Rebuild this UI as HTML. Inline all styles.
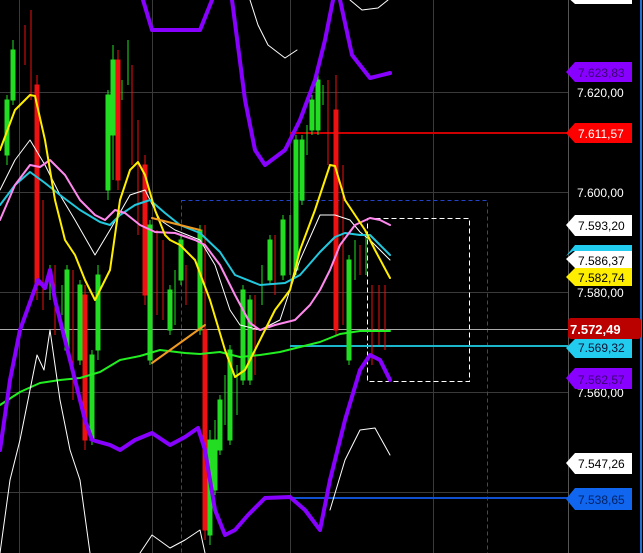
<!DOCTYPE html>
<html><head><style>
html,body{margin:0;padding:0;background:#000;}
svg{display:block}
text{font-family:"Liberation Sans",sans-serif;font-size:12px}
</style></head><body>
<svg width="643" height="553" viewBox="0 0 643 553" xmlns="http://www.w3.org/2000/svg">
<rect width="643" height="553" fill="#000"/>
<g stroke="#3a3a3a" stroke-width="1">
<line x1="19.5" y1="0" x2="19.5" y2="553"/><line x1="152.5" y1="0" x2="152.5" y2="553"/>
<line x1="290.5" y1="0" x2="290.5" y2="553"/><line x1="433.5" y1="0" x2="433.5" y2="553"/>
<line x1="0" y1="92.5" x2="568" y2="92.5"/><line x1="0" y1="192.5" x2="568" y2="192.5"/>
<line x1="0" y1="292.5" x2="568" y2="292.5"/><line x1="0" y1="392.5" x2="568" y2="392.5"/>
<line x1="0" y1="492.5" x2="568" y2="492.5"/>
</g>
<line x1="568.5" y1="0" x2="568.5" y2="553" stroke="#555"/>
<line x1="641" y1="0" x2="641" y2="553" stroke="#1e6fd0" stroke-width="2"/>
<rect x="181.5" y="200.5" width="306" height="360" fill="none" stroke="#2244cc" stroke-dasharray="4,3"/>
<rect x="367.5" y="218.5" width="102" height="163" fill="none" stroke="#fff" stroke-dasharray="5,3"/>
<line x1="0" y1="329.5" x2="568" y2="329.5" stroke="#aaa"/>
<line x1="290" y1="133" x2="568" y2="133" stroke="#c00" stroke-width="2"/>
<line x1="290" y1="346" x2="568" y2="346" stroke="#1bb5cc" stroke-width="2"/>
<line x1="290" y1="498" x2="568" y2="498" stroke="#1050d0" stroke-width="2"/>
<g id="c">
<g stroke="#22dd22" fill="#22dd22">
<path d="M7 95V165M13 40V105M98 265V360M108 90V200M113 45V180M122 80V100M128 40V85M150 220V365M170 285V335M175 270V325M181 235V285M200 225V335M210 430V545M215 420V495M220 395V455M225 375V425M230 345V445M237 365V415M243 285V385M250 295V385M262 265V305M270 235V285M283 215V280M290 215V275M296 135V275M302 135V205M307 125V155M312 95V135M318 75V135M323 85V105M349 255V365M355 240V280M366 235V275M50 265V300M62 285V315M67 265V355M80 280V365M92 350V445" stroke-width="1"/>
<rect x="5" y="100" width="4" height="55"/><rect x="11" y="50" width="4" height="50"/><rect x="96" y="275" width="4" height="75"/>
<rect x="106" y="95" width="4" height="95"/><rect x="111" y="60" width="4" height="75"/><rect x="148" y="225" width="4" height="135"/>
<rect x="168" y="290" width="4" height="40"/><rect x="179" y="240" width="4" height="40"/><rect x="198" y="230" width="4" height="100"/>
<rect x="208" y="440" width="4" height="95"/><rect x="213" y="440" width="4" height="50"/><rect x="218" y="400" width="4" height="50"/>
<rect x="228" y="350" width="4" height="90"/><rect x="241" y="290" width="4" height="90"/><rect x="248" y="300" width="4" height="80"/>
<rect x="268" y="240" width="4" height="40"/><rect x="281" y="220" width="4" height="55"/><rect x="294" y="140" width="4" height="130"/>
<rect x="300" y="140" width="4" height="60"/><rect x="310" y="100" width="4" height="30"/><rect x="316" y="80" width="4" height="50"/>
<rect x="347" y="260" width="4" height="100"/><rect x="65" y="270" width="4" height="80"/><rect x="78" y="285" width="4" height="75"/><rect x="90" y="355" width="4" height="85"/>
</g>
<g stroke="#ee1111" fill="#ee1111">
<path d="M25 25V65M31 10V100M37 75V300M43 200V310M55 265V335M73 270V400M85 285V450M118 50V190M132 65V165M138 120V235M145 155V305M157 230V315M163 240V320M186 265V305M205 225V540M255 295V375M275 235V295M328 80V165M336 75V335M343 165V325M360 245V275M372 285V365M379 285V345M385 285V350"/>
<rect x="35" y="85" width="4" height="200"/><rect x="203" y="330" width="4" height="200"/><rect x="334" y="110" width="4" height="220"/>
<rect x="116" y="60" width="4" height="120"/><rect x="143" y="165" width="4" height="130"/><rect x="83" y="295" width="4" height="145"/>
</g>
</g>
<g fill="none" stroke-linejoin="round" stroke-linecap="round">
<polyline stroke="#22ee22" stroke-width="2" points="0,405 20,392 40,383 60,380 80,378 100,372 120,360 140,356 160,350 185,353 200,354 220,352 240,357 260,355 280,352 300,347 320,342 340,334 360,331 390,331"/>
<polyline stroke="#fff" stroke-width="1" points="0,553 10,480 20,440 30,390 37,355 44,370 50,330 60,400 70,450 80,480 90,553"/>
<polyline stroke="#fff" stroke-width="1" points="140,553 152,535 170,548 185,540 200,530 205,553"/>
<polyline stroke="#fff" stroke-width="1" points="330,510 345,460 360,430 375,428 390,455"/>
<polyline stroke="#fff" stroke-width="1" points="350,0 362,10 378,8 388,0"/>
<polyline stroke="#fff" stroke-width="1" points="250,0 258,25 268,45 285,58 297,50"/>
<polyline stroke="#fff" stroke-width="1" points="0,190 15,160 30,140 45,165 60,195 75,220 95,255 110,230 130,195 145,190 160,220 175,230 200,240 215,265 230,310 240,325 260,330 280,320 300,260 320,215 335,215 350,220 360,232 370,240 390,260"/>
<polyline stroke="#22c8dd" stroke-width="2" points="0,205 15,185 30,172 45,183 60,195 80,210 100,222 110,225 120,215 135,205 150,200 165,213 180,225 200,233 220,252 235,275 260,285 285,283 300,275 320,252 335,237 345,233 360,235 370,235 380,245 390,255"/>
<polyline stroke="#ff88ee" stroke-width="2" points="0,220 15,185 30,165 40,167 50,160 65,175 80,200 95,215 105,220 115,210 125,213 140,225 155,232 175,233 195,240 205,245 220,265 235,295 250,323 260,330 275,325 295,320 310,305 320,290 330,270 340,245 355,225 370,218 380,220 390,225"/>
<polyline stroke="#ffee00" stroke-width="2" points="0,150 15,110 30,95 35,96 45,140 55,200 65,240 75,255 85,280 95,300 110,270 120,200 130,170 138,162 145,175 155,210 165,235 170,240 180,245 195,260 210,300 225,350 235,377 245,370 260,340 275,310 290,290 300,250 315,210 330,165 335,166 345,200 355,215 365,230 375,250 390,278"/>
<polyline stroke="#ee9922" stroke-width="2" points="152,363 205,325"/>
<polyline stroke="#ee9922" stroke-width="2" points="152,218 200,230"/>
<polyline stroke="#8800ff" stroke-width="4" points="143,0 152,30 200,30 212,0"/>
<polyline stroke="#8800ff" stroke-width="4" points="232,0 245,100 255,150 265,165 285,150 300,120 315,80 325,40 333,0"/>
<polyline stroke="#8800ff" stroke-width="4" points="340,0 352,55 370,78 390,73"/>
<polyline stroke="#8800ff" stroke-width="4" points="0,450 10,380 20,330 38,280 45,288 50,270 55,300 70,360 85,420 92,440 110,445 120,450 135,440 152,433 170,445 185,437 198,428 205,450 215,510 225,535 235,530 248,515 265,498 290,497 305,510 320,530 330,480 345,420 360,370 370,355 380,360 390,380"/>
</g>
<g fill="#fff">
<text x="577" y="97">7.620,00</text><text x="577" y="197">7.600,00</text>
<text x="577" y="297">7.580,00</text><text x="577" y="397">7.560,00</text>
</g>
<g>
<path d="M575 -12H632V4H575L566 -4Z" fill="#fff"/>
<path d="M575 62H632V82H575L566 72Z" fill="#8800ff"/><text x="578" y="77" fill="#3a0070">7.623,83</text>
<path d="M575 123H632V143H575L566 133Z" fill="#ff0000"/><text x="578" y="138" fill="#fff">7.611,57</text>
<path d="M575 215H632V236H575L566 225Z" fill="#fff"/><text x="578" y="230" fill="#000">7.593,20</text>
<path d="M575 245H632V251H573L566 256Z" fill="#22ccee"/>
<path d="M575 251H632V268H575L566 259Z" fill="#fff"/><text x="578" y="265" fill="#000">7.586,37</text>
<path d="M575 268H632V286H575L566 277Z" fill="#ffee00"/><text x="578" y="282" fill="#000">7.582,74</text>
<rect x="568" y="318" width="73" height="21" rx="3" fill="#bb0000"/><text x="570" y="334" fill="#fff" font-weight="bold" style="font-size:13px">7.572,49</text>
<path d="M575 339H632V358H575L566 348Z" fill="#22ccee"/><text x="578" y="352" fill="#113">7.569,32</text>
<path d="M575 368H632V389H575L566 378Z" fill="#8800ff"/><text x="578" y="384" fill="#3a0070">7.562,57</text>
<path d="M575 453H632V474H575L566 463Z" fill="#fff"/><text x="578" y="468" fill="#000">7.547,26</text>
<path d="M575 488H632V510H575L566 499Z" fill="#1066ee"/><text x="578" y="504" fill="#002266">7.538,65</text>
</g>
</svg>
</body></html>
